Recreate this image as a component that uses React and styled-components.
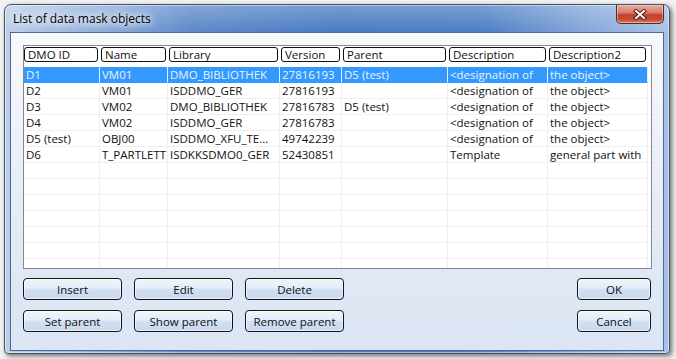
import React from "react";
import styled, { createGlobalStyle } from "styled-components";

const GlobalStyle = createGlobalStyle`
  html, body { margin: 0; padding: 0; background: #f2f2f2; }
  body { font-family: "Open Sans", "Noto Sans", "DejaVu Sans", sans-serif; }
  * { box-sizing: border-box; }
`;

const Page = styled.div`
  width: 676px;
  height: 359px;
  padding: 4px 0 0 4px;
  overflow: hidden;
`;

const Window = styled.div`
  width: 666px;
  height: 350px;
  display: flex;
  flex-direction: column;
  border: 1px solid #44546a;
  border-radius: 7px 7px 4px 4px;
  background:
    linear-gradient(180deg, rgba(255,255,255,0.25) 0px, rgba(255,255,255,0) 27px),
    linear-gradient(90deg, #bccfe8 0%, #94b2dc 12%, #5d89c9 28%, #4a7bc3 50%, #4d7ec4 72%, #86a8da 88%, #a9c2e5 100%);
  box-shadow: 2px 2px 5px rgba(0, 0, 0, 0.55), inset 0 0 0 1px rgba(255,255,255,0.45);
`;

const TitleBar = styled.div`
  height: 27px;
  flex: none;
  display: flex;
  align-items: flex-start;
  padding-left: 8px;
`;

const Title = styled.div`
  font-size: 12px;
  line-height: 27px;
  color: #000;
  text-shadow: 0 0 6px #fff, 0 0 10px #fff, 0 0 14px rgba(255,255,255,0.9);
`;

const CloseButton = styled.div`
  margin-left: auto;
  margin-right: 5px;
  width: 48px;
  height: 19px;
  display: flex;
  align-items: center;
  justify-content: center;
  border: 1px solid #5a2a26;
  border-top: none;
  border-radius: 0 0 5px 5px;
  background: linear-gradient(180deg, #e8a99d 0%, #d98270 40%, #c3412c 55%, #c84a35 80%, #d9806c 100%);
  box-shadow: inset 0 0 0 1px rgba(255,255,255,0.35);
`;

const Client = styled.div`
  flex: 1;
  margin: 0 5px 2px 5px;
  border: 1px solid #4c6a95;
  background: linear-gradient(180deg, #f8f9fc 0%, #eaeff8 40%, #e0e8f5 75%, #dce5f3 100%);
  padding: 12px 9px 0 12px;
  display: flex;
  flex-direction: column;
`;

const Table = styled.div`
  width: 629px;
  height: 224px;
  flex: none;
  border: 1px solid #828790;
  background: #fff;
  overflow: hidden;
`;

const HeaderRow = styled.div`
  display: flex;
  height: 21px;
  padding-top: 1px;
`;

const HeaderCell = styled.div`
  width: ${(p) => p.$w}px;
  flex: none;
  padding: 0 2px 0 0;
  &:not(:first-child) { padding-left: 1px; }
`;

const HeaderBox = styled.div`
  height: 15px;
  border: 1px solid #111;
  border-radius: 3px;
  padding-left: 3px;
  font-size: 11.5px;
  line-height: 13px;
  color: #111;
  white-space: nowrap;
  overflow: hidden;
`;

const Row = styled.div`
  display: flex;
  height: 16px;
`;

const Cell = styled.div`
  width: ${(p) => p.$w}px;
  flex: none;
  height: 16px;
  border-right: 1px solid ${(p) => (p.$sel ? "#e6eefa" : "#f0f0f0")};
  border-bottom: 1px solid ${(p) => (p.$sel ? "#3399ff" : "#f0f0f0")};
  background: ${(p) => (p.$sel ? "#3399ff" : "transparent")};
  color: ${(p) => (p.$sel ? "#eaf2ff" : "#111")};
  font-size: 11.5px;
  line-height: 15px;
  padding-left: 2px;
  white-space: nowrap;
  overflow: hidden;
`;

const Filler = styled.div`
  flex: 1;
  border-bottom: 1px solid #f0f0f0;
`;

const ButtonArea = styled.div`
  margin-top: 9px;
  padding-right: 3px;
  display: flex;
`;

const ButtonGrid = styled.div`
  display: grid;
  grid-template-columns: repeat(3, 99px);
  grid-auto-rows: 22px;
  column-gap: 12px;
  row-gap: 10px;
`;

const ButtonColumn = styled.div`
  margin-left: auto;
  display: grid;
  grid-template-columns: 74px;
  grid-auto-rows: 22px;
  row-gap: 10px;
`;

const Button = styled.div`
  border: 1px solid #151515;
  border-radius: 4px;
  background: linear-gradient(180deg, #f1f5fb 0%, #e4ecf8 45%, #d3e0f3 52%, #c7d8ef 100%);
  box-shadow: inset 0 0 0 1px rgba(255,255,255,0.6);
  display: flex;
  align-items: center;
  justify-content: center;
  font-size: 11.5px;
  color: #111;
`;

const widths = [76, 68, 112, 62, 106, 100, 100];
const headers = ["DMO ID", "Name", "Library", "Version", "Parent", "Description", "Description2"];
const rows = [
  ["D1", "VM01", "DMO_BIBLIOTHEK", "27816193", "D5 (test)", "<designation of", "the object>"],
  ["D2", "VM01", "ISDDMO_GER", "27816193", "", "<designation of", "the object>"],
  ["D3", "VM02", "DMO_BIBLIOTHEK", "27816783", "D5 (test)", "<designation of", "the object>"],
  ["D4", "VM02", "ISDDMO_GER", "27816783", "", "<designation of", "the object>"],
  ["D5 (test)", "OBJ00", "ISDDMO_XFU_TE...", "49742239", "", "<designation of", "the object>"],
  ["D6", "T_PARTLETT", "ISDKKSDMO0_GER", "52430851", "", "Template", "general part with"],
];
const emptyRows = Array.from({ length: 8 }, () => ["", "", "", "", "", "", ""]);

function CloseX() {
  return (
    <svg width="14" height="11" viewBox="0 0 14 11">
      <path d="M3 2 L11 9 M11 2 L3 9" stroke="#4a1d18" strokeWidth="4" strokeLinecap="square" />
      <path d="M3 2 L11 9 M11 2 L3 9" stroke="#fff" strokeWidth="2" strokeLinecap="square" />
    </svg>
  );
}

export default function App() {
  return (
    <>
      <GlobalStyle />
      <Page>
        <Window>
          <TitleBar>
            <Title>List of data mask objects</Title>
            <CloseButton>
              <CloseX />
            </CloseButton>
          </TitleBar>
          <Client>
            <Table>
              <HeaderRow>
                {headers.map((h, i) => (
                  <HeaderCell key={h} $w={widths[i]}>
                    <HeaderBox>{h}</HeaderBox>
                  </HeaderCell>
                ))}
              </HeaderRow>
              {[...rows, ...emptyRows].map((r, ri) => (
                <Row key={ri}>
                  {r.map((c, ci) => (
                    <Cell key={ci} $w={widths[ci]} $sel={ri === 0}>
                      {c}
                    </Cell>
                  ))}
                  <Filler />
                </Row>
              ))}
            </Table>
            <ButtonArea>
              <ButtonGrid>
                <Button>Insert</Button>
                <Button>Edit</Button>
                <Button>Delete</Button>
                <Button>Set parent</Button>
                <Button>Show parent</Button>
                <Button>Remove parent</Button>
              </ButtonGrid>
              <ButtonColumn>
                <Button>OK</Button>
                <Button>Cancel</Button>
              </ButtonColumn>
            </ButtonArea>
          </Client>
        </Window>
      </Page>
    </>
  );
}
